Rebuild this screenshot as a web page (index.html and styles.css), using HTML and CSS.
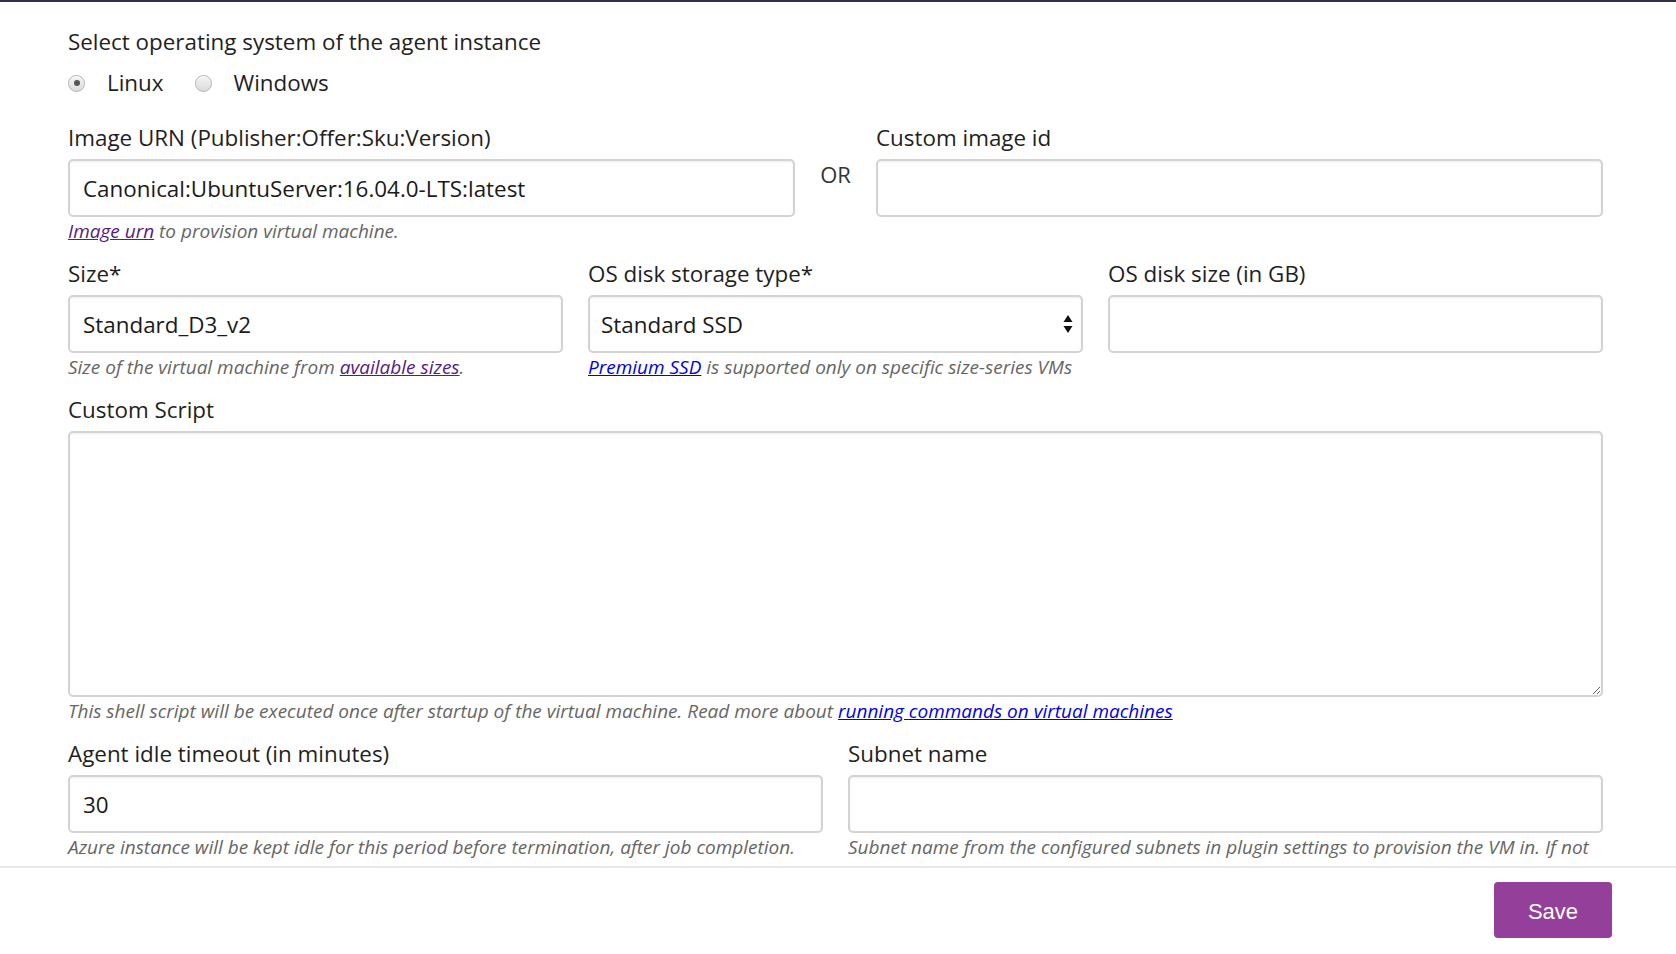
FILE: index.html
```html
<!DOCTYPE html>
<html lang="en">
<head>
<meta charset="utf-8">
<title>Agent instance settings</title>
<link rel="stylesheet" href="styles.css">
</head>
<body>
<div class="page">
  <div class="topline"></div>
  <main class="form">
    <div class="os-block">
      <div class="label">Select operating system of the agent instance</div>
      <div class="radios">
        <label class="radio"><input type="radio" name="os" checked><span>Linux</span></label>
        <label class="radio"><input type="radio" name="os"><span>Windows</span></label>
      </div>
    </div>

    <div class="row row-urn">
      <div class="field">
        <div class="label">Image URN (Publisher:Offer:Sku:Version)</div>
        <input class="input" type="text" value="Canonical:UbuntuServer:16.04.0-LTS:latest">
        <div class="help"><a class="visited" href="#">Image urn</a> to provision virtual machine.</div>
      </div>
      <div class="or">OR</div>
      <div class="field">
        <div class="label">Custom image id</div>
        <input class="input" type="text" value="">
      </div>
    </div>

    <div class="row row-3">
      <div class="field">
        <div class="label">Size*</div>
        <input class="input" type="text" value="Standard_D3_v2">
        <div class="help">Size of the virtual machine from <a class="visited" href="#">available sizes</a>.</div>
      </div>
      <div class="field">
        <div class="label">OS disk storage type*</div>
        <div class="input select">
          <span>Standard SSD</span>
          <svg class="arrows" width="10" height="20" viewBox="0 0 10 20"><path d="M5 1 L9.5 8 L0.5 8 Z" fill="#111"/><path d="M5 19 L9.5 12 L0.5 12 Z" fill="#111"/></svg>
        </div>
        <div class="help"><a class="link" href="#">Premium SSD</a> is supported only on specific size-series VMs</div>
      </div>
      <div class="field">
        <div class="label">OS disk size (in GB)</div>
        <input class="input" type="text" value="">
      </div>
    </div>

    <div class="row">
      <div class="field">
        <div class="label">Custom Script</div>
        <textarea class="input textarea"></textarea>
        <div class="help">This shell script will be executed once after startup of the virtual machine. Read more about <a class="link" href="#">running commands on virtual machines</a></div>
      </div>
    </div>

    <div class="row row-2">
      <div class="field">
        <div class="label">Agent idle timeout (in minutes)</div>
        <input class="input" type="text" value="30">
        <div class="help">Azure instance will be kept idle for this period before termination, after job completion.</div>
      </div>
      <div class="field">
        <div class="label">Subnet name</div>
        <input class="input" type="text" value="">
        <div class="help nowrap">Subnet name from the configured subnets in plugin settings to provision the VM in. If not</div>
      </div>
    </div>
  </main>
  <footer class="footer">
    <button class="save" type="button">Save</button>
  </footer>
</div>
</body>
</html>
```

FILE: styles.css
```css
* { box-sizing: border-box; }
html, body { margin: 0; padding: 0; background: #fff; }
body {
  font-family: "Open Sans", "Noto Sans", sans-serif;
  color: #1f1f1f;
}
.page {
  height: 100vh;
  display: flex;
  flex-direction: column;
  overflow: hidden;
}
.topline {
  height: 2px;
  background: #2e3044;
  flex: none;
}
.form {
  flex: 1;
  overflow: hidden;
  padding: 27px 73px 0 68px;
}
.label {
  font-size: 22.4px;
  line-height: 26px;
  margin-bottom: 8px;
  white-space: nowrap;
}
.os-block .label { margin-bottom: 0; }
.radios {
  display: flex;
  align-items: center;
  margin-top: 15px;
  height: 26px;
  gap: 31px;
}
.radio {
  display: flex;
  align-items: center;
  gap: 22px;
  font-size: 22.4px;
  line-height: 26px;
}
.radio input {
  appearance: none;
  -webkit-appearance: none;
  margin: 0;
  width: 17px;
  height: 17px;
  border-radius: 50%;
  border: 1px solid #b3b3b3;
  background: linear-gradient(#f4f4f4, #dcdcdc);
  box-shadow: inset 0 1px 1px rgba(255,255,255,.8);
  display: grid;
  place-items: center;
}
.radio input:checked::after {
  content: "";
  width: 6px;
  height: 6px;
  border-radius: 50%;
  background: #555;
}
.row {
  display: grid;
  grid-template-columns: 1fr;
  column-gap: 25px;
  margin-top: 18px;
}
.row-urn {
  margin-top: 29px;
  grid-template-columns: 1fr 81px 1fr;
  column-gap: 0;
}
.row-3 { grid-template-columns: repeat(3, 1fr); }
.row-2 { grid-template-columns: repeat(2, 1fr); }
.field { min-width: 0; }
.or {
  font-size: 22px;
  line-height: 26px;
  padding-top: 36px;
  text-align: center;
  color: #333;
}
.input {
  display: block;
  width: 100%;
  height: 58px;
  margin: 0;
  border: 2px solid #d3d3d3;
  border-radius: 5px;
  box-shadow: inset 0 1px 2px rgba(0,0,0,.08);
  background: #fff;
  font-family: "Open Sans", "Noto Sans", sans-serif;
  font-size: 22.4px;
  color: #1a1a1a;
  padding: 0 13px;
  outline: none;
}
.select {
  display: flex;
  align-items: center;
  justify-content: space-between;
  padding: 0 8px 0 11px;
}
.arrows { display: block; }
.textarea {
  height: 266px;
  resize: vertical;
  padding: 10px 13px;
}
.help {
  margin-top: 2px;
  font-size: 19px;
  line-height: 24px;
  font-style: italic;
  color: #666;
}
.help.nowrap { white-space: nowrap; overflow: hidden; }
.help a { text-decoration: underline; }
.visited { color: #551a8b; }
.link { color: #0000ee; }
.footer {
  flex: none;
  border-top: 2px solid #e6e9ee;
  padding: 14px 64px 16px 0;
  display: flex;
  justify-content: flex-end;
  background: #fff;
}
.save {
  width: 118px;
  height: 56px;
  border: none;
  border-radius: 4px;
  background: #943f9a;
  color: #fff;
  font-family: "Liberation Sans", Arial, sans-serif;
  font-size: 22px;
  padding-top: 4px;
  cursor: pointer;
}
```
